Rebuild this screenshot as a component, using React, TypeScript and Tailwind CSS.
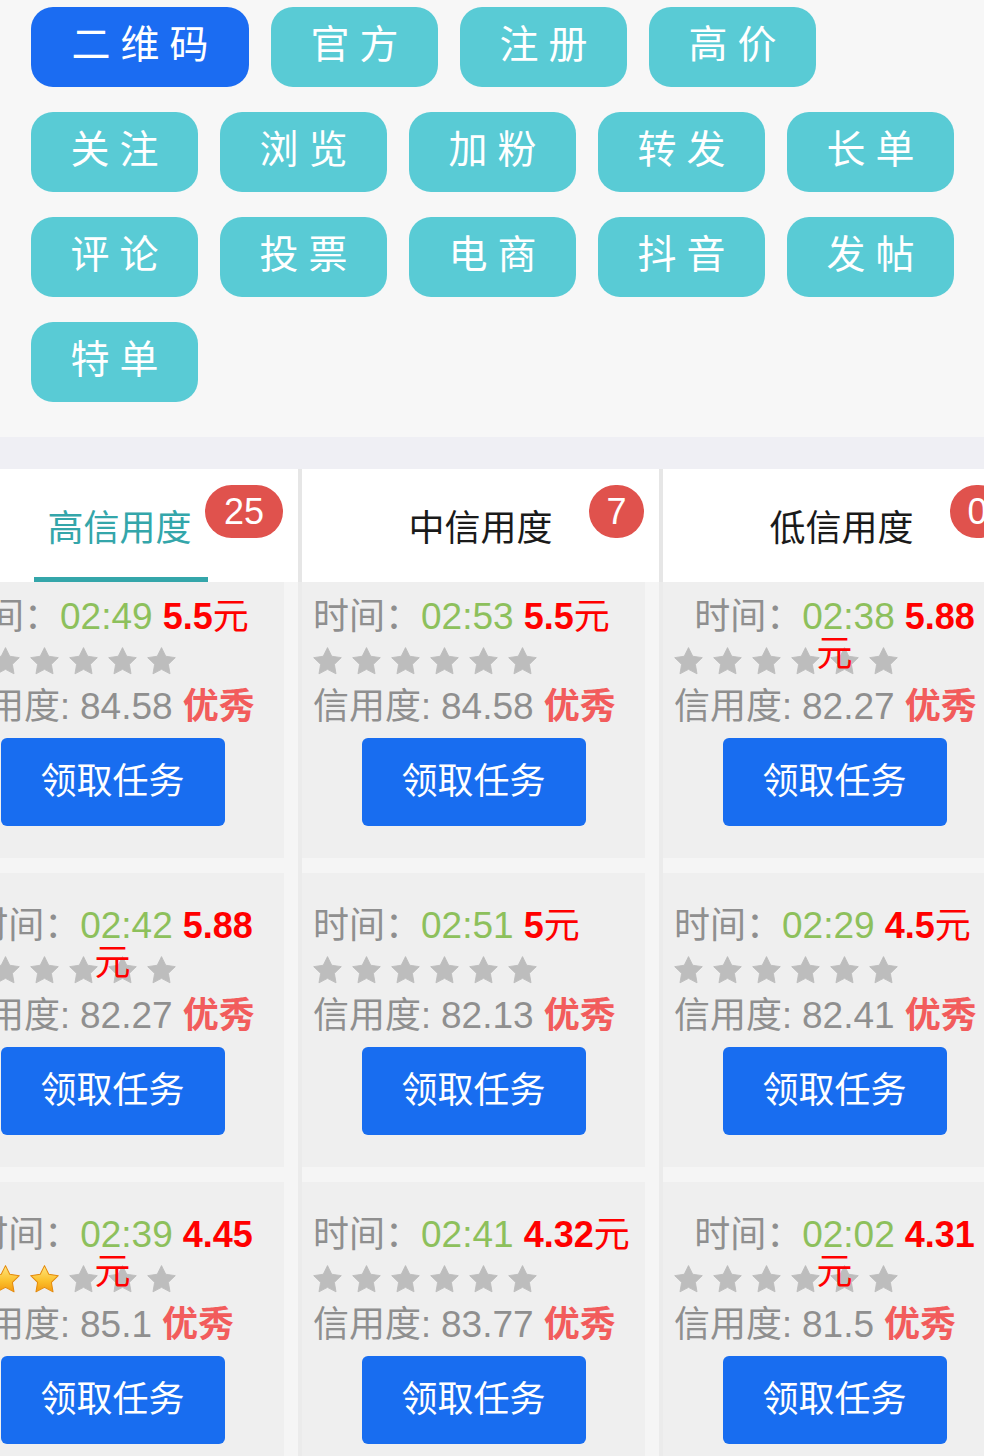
import type { ReactNode } from 'react'

const FONT = { fontFamily: '"Liberation Sans", "Noto Sans CJK SC", sans-serif' }

const categories = [
  { label: '二维码', wide: true, active: true },
  { label: '官方' },
  { label: '注册' },
  { label: '高价' },
  { label: '关注' },
  { label: '浏览' },
  { label: '加粉' },
  { label: '转发' },
  { label: '长单' },
  { label: '评论' },
  { label: '投票' },
  { label: '电商' },
  { label: '抖音' },
  { label: '发帖' },
  { label: '特单' },
]

interface Task {
  time: string
  price: string
  credit: string
  gold?: number
  wrap?: boolean
}

const columns: { title: string; count: string; active?: boolean; tasks: Task[] }[] = [
  {
    title: '高信用度',
    count: '25',
    active: true,
    tasks: [
      { time: '02:49', price: '5.5', credit: '84.58' },
      { time: '02:42', price: '5.88', credit: '82.27', wrap: true },
      { time: '02:39', price: '4.45', credit: '85.1', gold: 3, wrap: true },
    ],
  },
  {
    title: '中信用度',
    count: '7',
    tasks: [
      { time: '02:53', price: '5.5', credit: '84.58' },
      { time: '02:51', price: '5', credit: '82.13' },
      { time: '02:41', price: '4.32', credit: '83.77' },
    ],
  },
  {
    title: '低信用度',
    count: '0',
    tasks: [
      { time: '02:38', price: '5.88', credit: '82.27', wrap: true },
      { time: '02:29', price: '4.5', credit: '82.41' },
      { time: '02:02', price: '4.31', credit: '81.5', wrap: true },
    ],
  },
]

// fat five-point star, inner radius half of outer
const STAR =
  'M13 0.5L16.82 8.24 25.36 9.48 19.18 15.51 20.64 24.02 13 20 5.36 24.02 6.82 15.51 0.64 9.48 9.18 8.24z'

function Star({ gold }: { gold?: boolean }) {
  return (
    <svg width="29" height="28" viewBox="0 0 26 25">
      {gold ? (
        <>
          <defs>
            <linearGradient id="gold" x1="0" y1="0" x2="0" y2="1">
              <stop offset="0" stopColor="#ffe680" />
              <stop offset="0.6" stopColor="#fbbf2a" />
              <stop offset="1" stopColor="#f39a12" />
            </linearGradient>
          </defs>
          <path d={STAR} fill="url(#gold)" stroke="#e48a0c" strokeWidth="0.9" strokeLinejoin="round" />
        </>
      ) : (
        <path d={STAR} fill="#bdbdbd" stroke="#bdbdbd" strokeWidth="0.8" strokeLinejoin="round" />
      )}
    </svg>
  )
}

function TimeLine({ task }: { task: Task }) {
  const body: ReactNode = (
    <>
      <span className="text-[#8f8f8f]">时间：</span>
      <span className="text-[#8dc05c] text-[37px]">{task.time}</span>{' '}
      <span className="text-[#ff0000]">
        <b className="font-bold">{task.price}</b>
        {task.wrap && <br />}元
      </span>
    </>
  )
  return (
    <div
      className={`relative z-10 h-[37px] leading-[37px] whitespace-nowrap ${
        task.wrap ? 'text-center' : 'pl-[11px]'
      }`}
    >
      {body}
    </div>
  )
}

function TaskCard({ task }: { task: Task }) {
  return (
    <div className="w-[343px] h-[294px] bg-[#efefef] pt-[34px] flex flex-col text-[36px]">
      <TimeLine task={task} />
      <div className="flex gap-[10px] pl-[11px] mt-[12px]">
        {[0, 1, 2, 3, 4, 5].map((i) => (
          <Star key={i} gold={i < (task.gold ?? 0)} />
        ))}
      </div>
      <div className="pl-[11px] mt-[13px] h-[37px] leading-[37px] whitespace-nowrap">
        <span className="text-[#8f8f8f]">
          信用度: <span className="text-[37px]">{task.credit}</span>
        </span>{' '}
        <b className="font-bold text-[#f25c5c]">优秀</b>
      </div>
      <div className="flex justify-center mt-[13px]">
        <button className="w-[224px] h-[88px] rounded-[6px] bg-[#186df0] text-white text-[36px]">
          领取任务
        </button>
      </div>
    </div>
  )
}

export default function App() {
  return (
    <div className="w-full min-h-[1456px] bg-[#f5f5f5] overflow-hidden" style={FONT}>
      {/* category buttons */}
      <div className="bg-[#f7f7f7] pt-[7px] pb-[35px] pl-[31px] pr-[20px] flex flex-wrap gap-x-[22px] gap-y-[25px]">
        {categories.map((c) => (
          <button
            key={c.label}
            className={`${c.wide ? 'w-[218px]' : 'w-[167px]'} h-[80px] rounded-[22px] text-white text-[39px] tracking-[10px] pl-[10px] leading-none pb-[6px] ${
              c.active ? 'bg-[#1b6cf2]' : 'bg-[#59cbd5]'
            }`}
          >
            {c.label}
          </button>
        ))}
      </div>

      <div className="h-[32px] bg-[#efeff4]" />

      <div className="w-[984px] overflow-hidden">
        <div className="ml-[-59px] w-max">
          {/* tab header */}
          <div className="relative z-20 flex gap-[4px] bg-[#e6e6e6]">
            {columns.map((col) => (
              <div key={col.title} className="relative w-[357px] h-[113px] bg-white flex items-center justify-center pt-[6px]">
                <span className={`text-[36px] ${col.active ? 'text-[#34a6aa]' : 'text-[#1a1a1a]'}`}>{col.title}</span>
                <span
                  className={`absolute top-[16px] right-[15px] h-[53px] ${
                    col.count.length > 1 ? 'w-[78px]' : 'w-[55px]'
                  } rounded-full bg-[#e0524d] text-white text-[36px] leading-[53px] text-center`}
                >
                  {col.count}
                </span>
                {col.active && (
                  <div className="absolute bottom-0 left-[93px] w-[174px] h-[5px] bg-[#34a6aa]" />
                )}
              </div>
            ))}
          </div>

          {/* task lists */}
          <div className="flex gap-[4px] bg-[#ebebeb] mt-[-18px]">
            {columns.map((col) => (
              <div key={col.title} className="w-[357px] bg-[#f5f5f5] flex flex-col gap-[15px]">
                {col.tasks.map((t, i) => (
                  <TaskCard key={i} task={t} />
                ))}
              </div>
            ))}
          </div>
        </div>
      </div>
    </div>
  )
}
